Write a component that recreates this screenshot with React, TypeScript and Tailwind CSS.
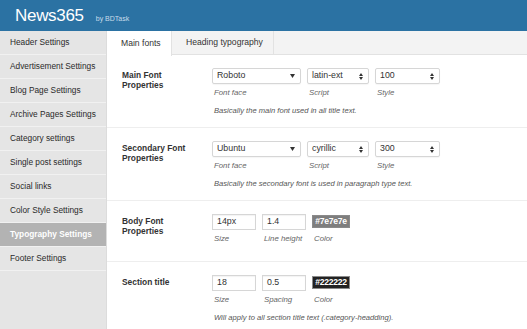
import React from 'react';

const menu = [
  'Header Settings',
  'Advertisement Settings',
  'Blog Page Settings',
  'Archive Pages Settings',
  'Category settings',
  'Single post settings',
  'Social links',
  'Color Style Settings',
  'Typography Settings',
  'Footer Settings',
];

const Select = ({ value, width, native = true }: { value: string; width: string; native?: boolean }) => (
  <div
    className={`${width} h-[16px] flex items-center justify-between pl-[4px] pr-[5px] bg-white border border-[#d6d6d6] rounded-[2px] shadow-[0_1px_1px_rgba(0,0,0,0.04)] text-[8.8px] text-[#333]`}
  >
    <span>{value}</span>
    {native ? (
      <svg width="4" height="7" viewBox="0 0 4 7" className="text-[#333]">
        <path d="M0 3 L2 0 L4 3 Z M0 4 L2 7 L4 4 Z" fill="currentColor" />
      </svg>
    ) : (
      <svg width="5" height="4" viewBox="0 0 5 4" className="text-[#333]">
        <path d="M0 0 L5 0 L2.5 4 Z" fill="currentColor" />
      </svg>
    )}
  </div>
);

const Input = ({ value }: { value: string }) => (
  <div className="w-[44px] h-[16px] flex items-center pl-[4px] bg-white border border-[#d6d6d6] shadow-[inset_0_1px_1px_rgba(0,0,0,0.05)] text-[8.8px] text-[#333]">
    {value}
  </div>
);

const Swatch = ({ value, bg }: { value: string; bg: string }) => (
  <div className="h-[16px] pt-[1px]">
    <div className={`w-[38px] h-[13px] flex items-center justify-center ${bg} border border-[#8a8a8a] text-[8.6px] font-bold text-white tracking-[-0.3px]`}>
      {value}
    </div>
  </div>
);

const Field = ({ children, caption }: { children: React.ReactNode; caption: string }) => (
  <div className="flex flex-col">
    {children}
    <span className="mt-[4px] h-[10px] leading-[10px] pl-[2px] text-[7.8px] italic text-[#666]">{caption}</span>
  </div>
);

const Row = ({
  label,
  children,
  desc,
  last = false,
}: {
  label: React.ReactNode;
  children: React.ReactNode;
  desc?: string;
  last?: boolean;
}) => (
  <div className={`flex px-[15px] pt-[13px] ${desc ? 'pb-[11px]' : 'pb-[17px]'} ${last ? '' : 'border-b border-[#eeeeee]'}`}>
    <div className="w-[90px] pt-[2px] text-[8.4px] leading-[10px] font-bold text-[#333]">{label}</div>
    <div className="flex flex-col">
      <div className="flex gap-[6px]">{children}</div>
      {desc && <p className="mt-[8px] h-[10px] leading-[10px] pl-[2px] text-[7.6px] italic text-[#555]">{desc}</p>}
    </div>
  </div>
);

export default function App() {
  return (
    <div className="w-[527px] h-[329px] overflow-hidden flex flex-col bg-white font-['Liberation_Sans',Arial,sans-serif]">
      <header className="h-[31px] shrink-0 bg-[#2b72a3] flex items-end pl-[15px] pb-[7px] gap-[12px]">
        <span className="text-[17px] leading-[17px] text-white tracking-[-0.3px]">News365</span>
        <span className="text-[7px] leading-[7px] mb-[2px] text-[#c9dcea]">by BDTask</span>
      </header>

      <div className="flex flex-1 min-h-0">
        <nav className="w-[107px] shrink-0 bg-[#e5e5e5] border-r border-[#dcdcdc]">
          {menu.map((item) => {
            const active = item === 'Typography Settings';
            return (
              <div
                key={item}
                className={`h-[24px] flex items-center pl-[10px] text-[8.3px] border-b border-[#f1f1f1] ${
                  active ? 'bg-[#b3b3b3] text-white font-bold' : 'text-[#2a2a2a]'
                }`}
              >
                {item}
              </div>
            );
          })}
        </nav>

        <main className="flex-1 flex flex-col min-w-0">
          <div className="h-[24px] shrink-0 flex bg-[#f3f3f3] border-b border-[#e2e2e2]">
            <div className="w-[65px] h-[25px] flex items-center pl-[14px] bg-white border-r border-[#e2e2e2] text-[8.6px] text-[#333]">
              Main fonts
            </div>
            <div className="w-[102px] flex items-center pl-[14px] border-r border-[#e2e2e2] text-[8.6px] text-[#333]">
              Heading typography
            </div>
          </div>

          <Row
            label={<>Main Font<br />Properties</>}
            desc="Basically the main font used in all title text."
          >
            <Field caption="Font face"><Select value="Roboto" width="w-[89px]" native={false} /></Field>
            <Field caption="Script"><Select value="latin-ext" width="w-[62px]" /></Field>
            <Field caption="Style"><Select value="100" width="w-[65px]" /></Field>
          </Row>

          <Row
            label={<>Secondary Font<br />Properties</>}
            desc="Basically the secondary font is used in paragraph type text."
          >
            <Field caption="Font face"><Select value="Ubuntu" width="w-[89px]" native={false} /></Field>
            <Field caption="Script"><Select value="cyrillic" width="w-[62px]" /></Field>
            <Field caption="Style"><Select value="300" width="w-[65px]" /></Field>
          </Row>

          <Row label={<>Body Font<br />Properties</>}>
            <Field caption="Size"><Input value="14px" /></Field>
            <Field caption="Line height"><Input value="1.4" /></Field>
            <Field caption="Color"><Swatch value="#7e7e7e" bg="bg-[#7e7e7e]" /></Field>
          </Row>

          <Row label="Section title" desc="Will apply to all section title text (.category-headding)." last>
            <Field caption="Size"><Input value="18" /></Field>
            <Field caption="Spacing"><Input value="0.5" /></Field>
            <Field caption="Color"><Swatch value="#222222" bg="bg-[#222222]" /></Field>
          </Row>
        </main>
      </div>
    </div>
  );
}
